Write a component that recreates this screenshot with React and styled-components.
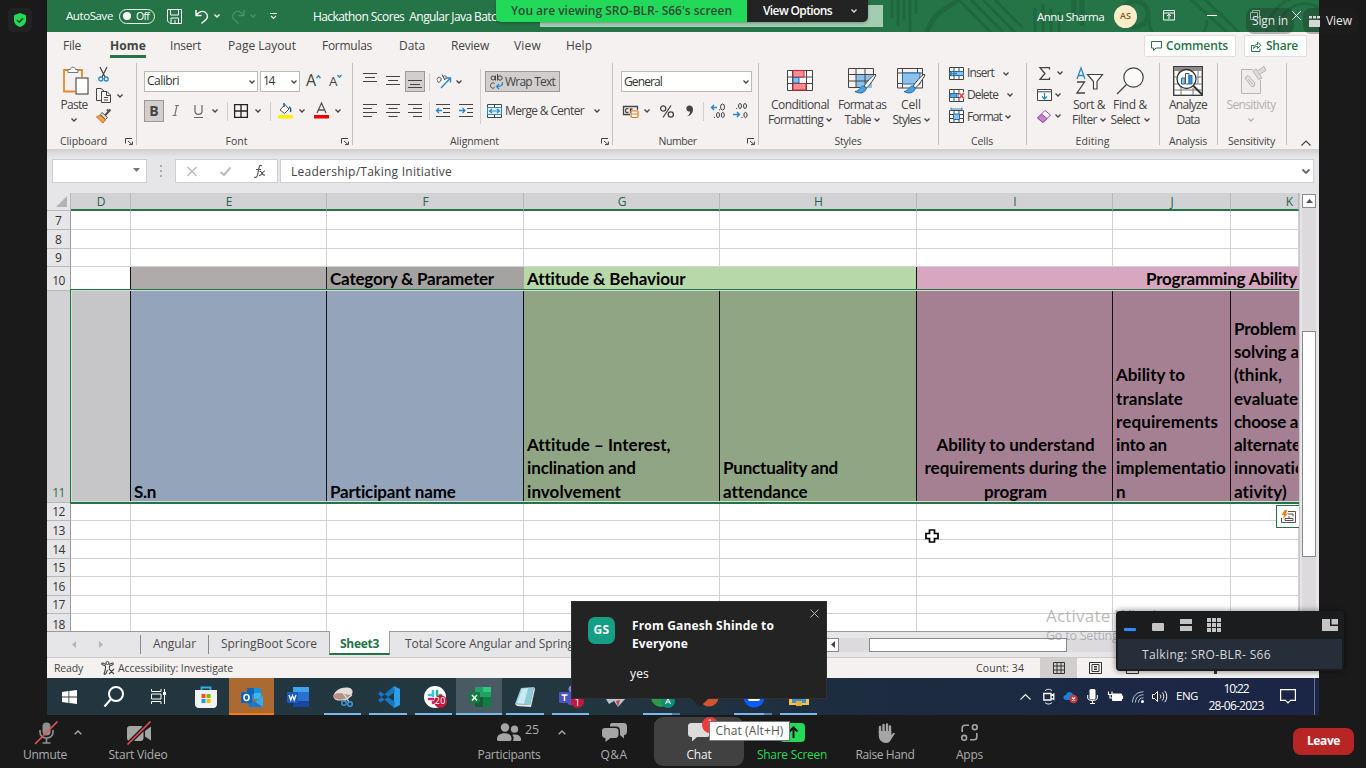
import React, { useLayoutEffect, useRef } from "react";
import styled, { createGlobalStyle } from "styled-components";

const Global = createGlobalStyle`
  * { box-sizing: border-box; }
  html, body { margin: 0; padding: 0; background: #1a1a1a; overflow: hidden; }
  body { font-family: "Open Sans", "Noto Sans", sans-serif; font-size: 12px; line-height: 1.2; color: #444; }
`;

/* ---------- text ---------- */
const TextSpan = styled.span`
  display: inline-block;
  width: max-content;
  flex: none;
  white-space: pre;
  font-size: ${(p) => p.$s || 12}px;
  font-weight: ${(p) => (p.$b ? p.$b : 400)};
  color: ${(p) => p.$c || "inherit"};
  margin-left: ${(p) => p.$ml || 0}px;
  margin-top: ${(p) => p.$mt || 0}px;
  font-family: ${(p) => (p.$lato ? 'Lato, "Open Sans", sans-serif' : "inherit")};
`;

/* Tracks its letters so that the text takes exactly w pixels. */
function T({ w, s, b, c, ml, mt, lato, children }) {
  const ref = useRef(null);
  useLayoutEffect(() => {
    const el = ref.current;
    if (!w) return;
    el.style.letterSpacing = "0px";
    const natural = el.getBoundingClientRect().width;
    el.style.letterSpacing = `${(w - natural) / el.textContent.length}px`;
  }, [w, children]);
  return (
    <TextSpan ref={ref} $s={s} $b={b} $c={c} $ml={ml} $mt={mt} $lato={lato}>
      {children}
    </TextSpan>
  );
}

const Svg = styled.svg`
  display: block;
  flex: none;
  overflow: visible;
  margin-left: ${(p) => p.$ml || 0}px;
  margin-top: ${(p) => p.$mt || 0}px;
`;
function I({ w, h, vb, ml, mt, children }) {
  return (
    <Svg width={w} height={h} viewBox={vb || `0 0 ${w} ${h}`} fill="none" $ml={ml} $mt={mt}>
      {children}
    </Svg>
  );
}
const Chev = ({ ml, mt, c = "#444", w = 6, sw = 1.3 }) => (
  <I w={w} h={4} vb="0 0 6 4" ml={ml} mt={mt}>
    <path d="M.5 .5L3 3L5.5 .5" stroke={c} strokeWidth={sw} />
  </I>
);

/* ---------- frame ---------- */
const Meeting = styled.div`
  position: relative;
  width: 1366px;
  height: 768px;
  background: #1a1a1a;
  display: flex;
  flex-direction: column;
  overflow: hidden;
`;
const Stage = styled.div`
  display: flex;
  height: 715px;
`;
const Rail = styled.div`
  width: 47px;
  padding: 8px 0 0 8px;
`;
const Shield = styled.div`
  width: 24px;
  height: 24px;
  border-radius: 5px;
  background: #222;
  display: flex;
  align-items: center;
  justify-content: center;
`;
const Screen = styled.div`
  width: 1272px;
  display: flex;
  flex-direction: column;
  background: #e6e6e8;
  overflow: hidden;
`;

/* ---------- title bar ---------- */
const TitleBar = styled.div`
  position: relative;
  isolation: isolate;
  height: 32px;
  background: #247447;
  display: flex;
  align-items: center;
  color: #fff;
  flex: none;
`;
const Pattern = styled.svg`
  position: absolute;
  z-index: -1;
  left: 840px;
  top: 0;
`;
const Toggle = styled.div`
  width: 36px;
  height: 15px;
  margin-left: 6px;
  border: 1px solid #e8f2ec;
  border-radius: 8px;
  display: flex;
  align-items: center;
  flex: none;
`;
const Knob = styled.div`
  width: 8px;
  height: 8px;
  border-radius: 50%;
  background: #fff;
  margin-left: 3px;
`;
const TitleText = styled.div`
  width: 256px;
  padding-left: 33px;
  margin-top: 2px;
  flex: none;
`;
const SearchBox = styled.div`
  width: 343px;
  height: 22px;
  background: #a2cdb2;
  margin-left: 4px;
  flex: none;
`;
const Avatar = styled.div`
  width: 23px;
  height: 23px;
  border-radius: 50%;
  background: #fdecca;
  margin-left: 10px;
  display: flex;
  align-items: center;
  justify-content: center;
  flex: none;
`;

/* ---------- ribbon ---------- */
const TabRow = styled.div`
  height: 31px;
  background: #f4f1f0;
  display: flex;
  align-items: flex-start;
  flex: none;
`;
const Tab = styled.div`
  margin-left: ${(p) => p.$ml}px;
  height: 26px;
  line-height: 28px;
  border-bottom: 3px solid ${(p) => (p.$on ? "#247447" : "transparent")};
`;
const WhiteButton = styled.div`
  width: ${(p) => p.$w}px;
  height: 22px;
  margin: 3px 0 0 ${(p) => p.$ml}px;
  background: #fff;
  border: 1px solid #e1dfdd;
  border-radius: 2px;
  display: flex;
  align-items: center;
`;
const Ribbon = styled.div`
  height: 86px;
  background: #f4f1f0;
  display: flex;
  flex: none;
`;
const Group = styled.div`
  width: ${(p) => p.$w}px;
  height: 82px;
  border-right: 1px solid #c4c2c1;
  display: flex;
  flex-direction: column;
  flex: none;
`;
const GroupBody = styled.div`
  height: 75px;
  display: flex;
  flex-direction: ${(p) => (p.$col ? "column" : "row")};
  padding-top: ${(p) => p.$pt || 0}px;
  gap: ${(p) => p.$gap || 0}px;
`;
const GroupLabel = styled.div`
  height: 7px;
  display: flex;
  align-items: center;
`;
const LabelText = styled.div`
  flex: 1;
  display: flex;
  justify-content: center;
  padding-right: ${(p) => (p.$launch ? 5 : 1)}px;
`;
const LauncherSlot = styled.div`
  width: 11px;
`;
const Row = styled.div`
  display: flex;
  align-items: center;
  height: ${(p) => p.$h}px;
  flex: none;
`;
const Column = styled.div`
  display: flex;
  flex-direction: column;
  width: ${(p) => p.$w}px;
  gap: ${(p) => p.$gap || 0}px;
  padding-top: ${(p) => p.$pt || 0}px;
  flex: none;
`;
const Field = styled.div`
  width: ${(p) => p.$w}px;
  height: 21px;
  margin-left: ${(p) => p.$ml}px;
  padding: 0 2px 0 2px;
  background: #fff;
  border: 1px solid #bdbbba;
  display: flex;
  align-items: center;
  justify-content: space-between;
  color: #333;
`;
const Pressed = styled.div`
  width: ${(p) => p.$w}px;
  height: ${(p) => p.$h || 21}px;
  margin-left: ${(p) => p.$ml}px;
  background: #d1cecd;
  border: 1px solid #9c9a99;
  display: flex;
  align-items: center;
  justify-content: center;
  flex: none;
`;
const Rule = styled.div`
  width: 1px;
  height: ${(p) => p.$h}px;
  margin-left: ${(p) => p.$ml || 0}px;
  margin-top: ${(p) => p.$mt || 0}px;
  background: ${(p) => p.$c || "#d2d0cf"};
  flex: none;
`;
const BigButton = styled.div`
  width: ${(p) => p.$w}px;
  margin-left: ${(p) => p.$ml || 0}px;
  display: flex;
  flex-direction: column;
  align-items: center;
  flex: none;
  color: ${(p) => (p.$off ? "#b3b1b0" : "#444")};
`;
const BigIcon = styled.div`
  height: 35px;
  width: 100%;
  display: flex;
  align-items: center;
  justify-content: center;
`;
const BigLine = styled.div`
  height: 14.5px;
  display: flex;
  align-items: center;
  justify-content: center;
`;

/* ---------- formula bar ---------- */
const FormulaBar = styled.div`
  height: 44px;
  padding-top: 10px;
  display: flex;
  background: linear-gradient(#cfcfd0, #e6e6e8 8px);
  flex: none;
`;
const FormulaBox = styled.div`
  width: ${(p) => p.$w}px;
  height: 24px;
  margin-left: ${(p) => p.$ml}px;
  background: #fff;
  border: 1px solid #cfcfd1;
  display: flex;
  align-items: center;
  flex: none;
`;

/* ---------- sheet ---------- */
const SheetArea = styled.div`
  height: 438px;
  display: flex;
  flex: none;
`;
const Grid = styled.div`
  position: relative;
  width: 1252px;
  height: 438px;
  display: grid;
  grid-template-columns: 24px 60px 196px 197px 196px 197px 196px 118px 68px;
  grid-template-rows: 18px 19px 19px 18px 24px 212px 18px 19px 19px 18px 19px 18px 20px;
  overflow: hidden;
  background: #fff;
`;
const ColHead = styled.div`
  background: #d2d2d4;
  border-right: 1px solid #b8b8ba;
  border-bottom: 2px solid #247447;
  color: #24644a;
  display: flex;
  align-items: center;
  justify-content: center;
  padding-top: 2px;
  padding-left: ${(p) => p.$pl || 1}px;
`;
const Corner = styled.div`
  background: #e6e6e8;
  border-right: 1px solid #b8b8ba;
  border-bottom: 1px solid #b8b8ba;
  display: flex;
  align-items: center;
  justify-content: flex-end;
  padding-right: 3px;
`;
const RowHead = styled.div`
  background: ${(p) => (p.$on ? "#d2d2d4" : "#e6e6e8")};
  color: ${(p) => (p.$on ? "#247447" : "#333")};
  border-right: 1px solid #9a9a9c;
  border-bottom: 1px solid #b8b8ba;
  display: flex;
  align-items: flex-end;
  justify-content: center;
  line-height: ${(p) => (p.$tall ? 18 : 16)}px;
`;
const Cell = styled.div`
  background: ${(p) => p.$bg || "#fff"};
  border-right: 1px solid ${(p) => p.$line || "#d2d2d2"};
  border-bottom: ${(p) => (p.$flush ? 0 : 1)}px solid ${(p) => (p.$bg ? p.$bg : "#d2d2d2")};
  grid-column: span ${(p) => p.$span || 1};
  padding: 0 1px 0 3px;
  display: flex;
  flex-direction: column;
  justify-content: flex-end;
  align-items: ${(p) => p.$align || "flex-start"};
  color: #000;
  line-height: 23.3px;
  overflow: hidden;
  min-width: 0;
`;
const Selection = styled.div`
  position: absolute;
  left: 23px;
  top: 96px;
  width: 1260px;
  height: 215px;
  border: solid #247447;
  border-width: 1px 0 2px 1px;
  box-shadow: inset 0 0 0 1px #cfdfd5;
`;
const QuickTag = styled.div`
  position: absolute;
  left: 1229px;
  top: 312px;
  width: 24px;
  height: 23px;
  background: #fff;
  border: 1px solid #247447;
  display: flex;
  align-items: center;
  justify-content: center;
`;
const CrossCursor = styled.div`
  position: absolute;
  left: 878px;
  top: 336px;
`;
const Gutter = styled.div`
  width: 20px;
  padding: 1px 3px 0 2px;
  border-left: 1px solid #c6c6c8;
  background: #e6e6e8;
`;
const Track = styled.div`
  height: 437px;
  width: 14px;
  background: #dcdadd;
`;
const ScrollButton = styled.div`
  width: ${(p) => p.$w}px;
  height: ${(p) => p.$h}px;
  background: #fff;
  border: 1px solid #8a8a8c;
  display: flex;
  align-items: center;
  justify-content: center;
  margin-left: ${(p) => p.$ml || 0}px;
  flex: none;
`;
const Thumb = styled.div`
  width: 14px;
  height: 226px;
  margin-top: 123px;
  background: #fff;
  border: 1px solid #8a8a8c;
`;

/* ---------- sheet tabs, status ---------- */
const SheetTabs = styled.div`
  height: 26px;
  background: #e6e6e8;
  border-top: 1px solid #9a9a9c;
  display: flex;
  align-items: center;
  flex: none;
  color: #4a4a4a;
`;
const ActiveTab = styled.div`
  width: 61px;
  height: 24px;
  margin: -3px 0 0 12px;
  padding-top: 5px;
  background: #fff;
  border: 1px solid #9a9a9c;
  border-width: 0 1px 2px 1px;
  border-bottom-color: #247447;
  display: flex;
  align-items: center;
  justify-content: center;
  flex: none;
`;
const HTrack = styled.div`
  width: 470px;
  height: 14px;
  background: #dcdadd;
  display: flex;
  margin-left: 226px;
  flex: none;
`;
const StatusBar = styled.div`
  height: 21px;
  background: #f4f1f0;
  border-top: 1px solid #cbcacb;
  display: flex;
  align-items: center;
  flex: none;
`;
const ViewButton = styled.div`
  width: 37px;
  height: 20px;
  margin-left: ${(p) => p.$ml || 0}px;
  background: ${(p) => (p.$on ? "#d1cecd" : "transparent")};
  display: flex;
  align-items: center;
  justify-content: center;
`;

/* ---------- taskbar ---------- */
const Taskbar = styled.div`
  height: 37px;
  background: linear-gradient(90deg, #233640 0%, #22373f 40%, #1d2c40 65%, #1b2547 100%);
  display: flex;
  align-items: stretch;
  flex: none;
  color: #fff;
`;
const Slot = styled.div`
  position: relative;
  width: ${(p) => p.$w || 45.6}px;
  background: ${(p) => p.$bg || "transparent"};
  display: flex;
  align-items: center;
  justify-content: center;
  flex: none;
`;
const Running = styled.div`
  position: absolute;
  bottom: 0;
  left: ${(p) => (p.$full ? 0 : 4)}px;
  right: ${(p) => (p.$full ? 0 : 4)}px;
  height: 2px;
  background: ${(p) => p.$c || "#76b9ed"};
  border-right: ${(p) => (p.$multi ? "8px solid #4a80ae" : "0")};
`;
const CountDot = styled.div`
  position: absolute;
  left: 23px;
  top: 17px;
  width: 13px;
  height: 13px;
  border-radius: 50%;
  background: #c4183f;
  color: #fff;
  display: flex;
  align-items: center;
  justify-content: center;
`;
const Tray = styled.div`
  margin-left: auto;
  width: 300px;
  display: flex;
  align-items: center;
`;
const Clock = styled.div`
  width: 60px;
  margin-left: 8px;
  display: flex;
  flex-direction: column;
  align-items: center;
  line-height: 17px;
`;
const Peek = styled.div`
  width: 1px;
  height: 37px;
  margin-left: 18px;
  background: #69718a;
`;

/* ---------- meeting controls ---------- */
const Controls = styled.div`
  height: 53px;
  display: flex;
  align-items: flex-start;
  color: #adadad;
`;
const Control = styled.div`
  width: ${(p) => p.$w}px;
  height: 49px;
  margin: 2px 0 0 ${(p) => p.$ml}px;
  border-radius: 9px;
  background: ${(p) => (p.$on ? "#414141" : "transparent")};
  display: flex;
  flex-direction: column;
  align-items: center;
  flex: none;
`;
const ControlIcon = styled.div`
  height: 31px;
  display: flex;
  align-items: center;
  justify-content: center;
`;
const ControlLabel = styled.div`
  height: 14px;
  display: flex;
  align-items: center;
`;
const Leave = styled.div`
  width: 61px;
  height: 27px;
  margin: 13px 0 0 299px;
  border-radius: 8px;
  background: #b82525;
  display: flex;
  align-items: center;
  justify-content: center;
`;

/* ---------- overlays ---------- */
const Banner = styled.div`
  position: absolute;
  left: 496px;
  top: 0;
  width: 372px;
  height: 22px;
  display: flex;
  border-radius: 0 0 5px 5px;
  overflow: hidden;
  box-shadow: 0 1px 3px rgba(0, 0, 0, 0.3);
`;
const BannerPart = styled.div`
  width: ${(p) => p.$w}px;
  background: ${(p) => p.$bg};
  display: flex;
  align-items: center;
  padding-left: ${(p) => p.$pl}px;
`;
const Pill = styled.div`
  position: absolute;
  left: ${(p) => p.$x}px;
  top: 8px;
  width: ${(p) => p.$w}px;
  height: 26px;
  border-radius: 8px;
  background: rgba(34, 34, 34, 0.3);
  display: flex;
  align-items: center;
  padding-left: 6px;
  color: #e8e8e8;
`;
const Watermark = styled.div`
  position: absolute;
  left: 1046px;
  top: 606px;
  display: flex;
  flex-direction: column;
  color: rgba(120, 120, 120, 0.5);
`;
const SpeakerPanel = styled.div`
  position: absolute;
  left: 1116px;
  top: 611px;
  width: 228px;
  height: 60px;
  border-radius: 4px;
  background: #1b1c1e;
  padding: 0 2px;
  box-shadow: 0 0 6px rgba(0, 0, 0, 0.5);
`;
const SpeakerTools = styled.div`
  height: 28px;
  display: flex;
  align-items: center;
`;
const Speaker = styled.div`
  height: 30px;
  background: #262f39;
  display: flex;
  align-items: center;
  color: #d4d8dc;
`;
const Toast = styled.div`
  position: absolute;
  left: 571px;
  top: 601px;
  width: 256px;
  height: 98px;
  background: #232323;
  border: 1px solid #303030;
  display: flex;
  color: #fff;
`;
const ToastPointer = styled.div`
  position: absolute;
  left: 119px;
  top: 96px;
  border: 9px solid transparent;
  border-top-color: #232323;
  border-bottom: 0;
`;
const ToastAvatar = styled.div`
  width: 27px;
  height: 27px;
  margin: 15px 0 0 16px;
  border-radius: 7px;
  background: #169f85;
  display: flex;
  align-items: center;
  justify-content: center;
  flex: none;
`;
const ToastBody = styled.div`
  width: 170px;
  padding: 15px 0 0 17px;
  display: flex;
  flex-direction: column;
  line-height: 18px;
  flex: none;
`;
const Tooltip = styled.div`
  position: absolute;
  left: 709px;
  top: 721px;
  width: 81px;
  height: 20px;
  background: #fff;
  border: 1px solid #767676;
  display: flex;
  align-items: center;
  justify-content: center;
  color: #575757;
`;
const ChatBadge = styled.div`
  position: absolute;
  left: 702px;
  top: 717px;
  width: 16px;
  height: 16px;
  border-radius: 50%;
  background: #f23a3a;
  color: #fff;
  display: flex;
  justify-content: center;
  line-height: 12px;
`;

/* ---------- icon drawings ---------- */
const K = "#444";
const B = "#2b88c8";
const Lines = ({ rows, ml, h = 14 }) => (
  <I w={14} h={h} ml={ml}>
    {rows.map(([x1, x2, y], i) => (
      <path key={i} d={`M${x1} ${y}H${x2}`} stroke={K} />
    ))}
  </I>
);
const Launcher = () => (
  <I w={8} h={7}>
    <path d="M.5 5.5V.5H7M3 3L7 6.5M7.4 3.5V6.6H4" stroke={K} />
  </I>
);
const Brush = () => (
  <g>
    <path d="M27 6C23 9 19 14 16 18L18.5 20C22 17 26 11 28 7Z" fill="#f4f1f0" stroke={K} />
    <path d="M15.5 18C12 18 12 23 7 23.5C11 26 17 25.5 18.5 20Z" fill="#4ba0e0" stroke="#1d6fb0" />
  </g>
);
const TableGlyph = () => (
  <I w={28} h={26}>
    <rect x="8" y="6" width="16" height="14" fill="#8dc1ec" />
    <path d="M.5 .5H25.5V8M.5 .5V19.5H12M.5 6.5H25M.5 13H20M8 .5V20M17 .5V16" stroke={K} />
    <Brush />
  </I>
);
const CellStyleGlyph = () => (
  <I w={28} h={26}>
    <path d="M.5 .5H25.5V20H.5ZM.5 5H25M5.5 .5V20M.5 15.5H12M20.5 .5V8" stroke={K} />
    <path d="M5.5 5H23V16H5.5Z" fill="#8dc1ec" stroke="#1d6fb0" />
    <Brush />
  </I>
);
const CellsGlyph = ({ kind }) => (
  <I w={15} h={13} ml={10}>
    <path d="M.5 .5H14.5V12.5H.5ZM.5 4.5H14.5M.5 8.5H14.5M5 .5V12.5M10 .5V12.5" stroke={K} fill="#fff" />
    {kind === "insert" && <path d="M5 4.5H14.5V8.5H5Z" fill="#8dc1ec" stroke="#1d6fb0" />}
    {kind === "insert" && <path d="M8 6.5H1M3.5 4L1 6.5L3.5 9" stroke={B} strokeWidth="1.4" />}
    {kind === "delete" && <path d="M1 4.5H8V8.5H1Z" fill="#5ba4dd" stroke="#1d6fb0" />}
    {kind === "delete" && <path d="M10 3H15V10H10Z" fill="#f4f1f0" />}
    {kind === "delete" && <path d="M10 4L15 9.5M15 4L10 9.5" stroke="#e33a3a" strokeWidth="1.5" />}
    {kind === "format" && <path d="M4.5 4H10.5V9.5H4.5Z" fill="#8dc1ec" stroke="#1d6fb0" />}
    {kind === "format" && <path d="M2 -1H13M2 -2.5V.5M13 -2.5V.5" stroke={B} />}
  </I>
);
const UserGlyph = () => (
  <g fill="#a5a5a5">
    <circle cx="8" cy="4.5" r="4.2" />
    <circle cx="17.5" cy="6.2" r="3.6" />
    <path d="M0 16C0 12.5 3 10.3 7.5 10.3C12 10.3 14.5 12.5 14.5 15.5C14.5 17.3 14 18 13 18H1.5C.5 18 0 17.5 0 16Z" />
    <path d="M15.8 18H23C24 18 24.3 17 24 15.5C23 11.5 19 10.8 15.2 11.8C17 13.5 17 16 15.8 18Z" />
  </g>
);

/* ---------- sections ---------- */
function Title() {
  return (
    <TitleBar>
      <Pattern width="432" height="32" fill="none" stroke="#1d613b" strokeWidth="3" opacity=".6">
        <path d="M5 0V18M11 0V26M17 0V20M23 0V32M29 0V14M72 0L104 32M84 0L116 32M96 0L128 32M108 0L135 27M148 8V32M156 4V32M164 8V32M172 12V32M262 18A22 22 0 0 0 320 20M300 -4L340 32M312 -6L352 32M392 32A26 26 0 0 1 432 8M380 32A38 38 0 0 1 420 -4" />
        <circle cx="248" cy="14" r="13" strokeWidth="5" />
        <path d="M40 32C50 6 62 10 70 0M187 0V20M195 0V26" strokeWidth="5" />
      </Pattern>
      <T w={47} s={11.5} ml={19}>AutoSave</T>
      <Toggle>
        <Knob />
        <T w={13} s={10.5} ml={5}>Off</T>
      </Toggle>
      <I w={15} h={15} ml={12}>
        <path d="M.5 .5H14.5V14.5H3L.5 12ZM3.5 .5V6H11.5V.5M4 14V9H11.5V14M8 11V14" stroke="#fff" />
      </I>
      <I w={14} h={15} ml={13}>
        <path d="M1 1V6.5H6.5M1 6.5C4 2 8 1.5 10.5 3.5C13.5 6 12.5 9 11 10.5L6.5 14.5" stroke="#fff" strokeWidth="1.4" />
      </I>
      <Chev c="#fff" ml={5} />
      <I w={14} h={15} ml={11}>
        <path d="M13 1V6.5H7.5M13 6.5C10 2 6 1.5 3.5 3.5C.5 6 1.5 9 3 10.5L7.5 14.5" stroke="#4b9069" strokeWidth="1.3" />
      </I>
      <Chev c="#4b9069" ml={5} />
      <I w={7} h={7} ml={14}>
        <path d="M0 .5H7M1 3L3.5 5.5L6 3" stroke="#fff" strokeWidth="1.2" />
      </I>
      <Rule $h={0} $ml={2} />
      <TitleText>
        <T w={190} s={12}>Hackathon Scores  Angular Java Batch</T>
      </TitleText>
      <SearchBox />
      <T w={67} s={11.5} ml={154} mt={1}>Annu Sharma</T>
      <Avatar>
        <T w={11} s={9} c="#7a5a14" b={600}>AS</T>
      </Avatar>
      <I w={12} h={11} ml={26} mt={-1}>
        <path d="M.5 .5H11.5V10H.5ZM.5 3H11.5M6 9V4.5M4 6L6 4.2L8 6" stroke="#fff" />
      </I>
      <I w={10} h={1} ml={32} mt={-2}>
        <path d="M0 .5H10" stroke="#fff" />
      </I>
      <I w={10} h={10} ml={33} mt={-2}>
        <path d="M.5 2.5H7.5V9.5H.5ZM2.5 2V.5H9.5V7.5H8" stroke="#d5e6dc" />
      </I>
      <I w={9} h={9} ml={32} mt={-2}>
        <path d="M0 0L9 9M9 0L0 9" stroke="#fff" />
      </I>
    </TitleBar>
  );
}

const TABS = [
  ["File", 18, 16], ["Home", 36, 29], ["Insert", 31, 24], ["Page Layout", 68, 27], ["Formulas", 50, 26],
  ["Data", 26, 27], ["Review", 38, 26], ["View", 27, 25], ["Help", 26, 25],
];

function Tabs() {
  return (
    <TabRow>
      {TABS.map(([name, w, ml]) => (
        <Tab key={name} $ml={ml} $on={name === "Home"}>
          <T w={w} s={12} b={name === "Home" ? 700 : 400}>{name}</T>
        </Tab>
      ))}
      <WhiteButton $w={92} $ml={552}>
        <I w={11} h={10} ml={6}>
          <path d="M.5 .5H10.5V7H5L2.5 9.3V7H.5Z" stroke="#247447" />
        </I>
        <T w={62} s={12} b={600} c="#247447" ml={4}>Comments</T>
      </WhiteButton>
      <WhiteButton $w={63} $ml={8}>
        <I w={10} h={11} ml={6}>
          <path d="M3 4.5H.5V10.5H9V7.5M2.5 7.5C3 4.5 4.5 3.5 6.5 3.5V1L9.8 4.3L6.5 7.5V5.5C4.5 5.5 3.5 6 2.5 7.5Z" stroke="#247447" />
        </I>
        <T w={32} s={12} b={600} c="#247447" ml={5}>Share</T>
      </WhiteButton>
    </TabRow>
  );
}

function Label({ w, launch, children }) {
  return (
    <GroupLabel>
      <LabelText $launch={launch}>
        <T w={w} s={10.5}>{children}</T>
      </LabelText>
      {launch && <LauncherSlot><Launcher /></LauncherSlot>}
    </GroupLabel>
  );
}

function RibbonBar() {
  return (
    <Ribbon>
      <Group $w={90}>
        <GroupBody>
          <BigButton $w={36} $ml={9}>
            <BigIcon>
              <I w={26} h={29} ml={4}>
                <path d="M5 4H1V25.5H12" stroke="#e38b2c" strokeWidth="1.8" />
                <path d="M15 4H19V11" stroke="#e38b2c" strokeWidth="1.8" />
                <path d="M5 6.5V3.5H7.5C7.5 .5 12.5 .5 12.5 3.5H15V6.5Z" fill="#fff" stroke="#777" />
                <rect x="13" y="12" width="12" height="16" fill="#fff" stroke="#333" />
              </I>
            </BigIcon>
            <BigLine><T w={27} s={12}>Paste</T></BigLine>
            <BigLine><Chev /></BigLine>
          </BigButton>
          <Column $w={36} $pt={4} $gap={6}>
            <I w={11} h={15} ml={6}>
              <path d="M2 0L7 10M9 0L4 10" stroke={K} strokeWidth="1.2" />
              <circle cx="2.8" cy="12" r="2" stroke={B} strokeWidth="1.3" />
              <circle cx="8.2" cy="12" r="2" stroke={B} strokeWidth="1.3" />
            </I>
            <Row $h={15}>
              <I w={15} h={15} ml={4}>
                <path d="M5 12.5H.5V.5H5L8 3M5.5 3.5H11L14.5 7V14.5H5.5ZM10.5 3.5V7.5H14M8 9.5H12M8 12H12" stroke={K} />
              </I>
              <Chev ml={6} />
            </Row>
            <I w={15} h={15} ml={4}>
              <path d="M14.5 .5L9 6.5M13.5 3L11 .5" stroke="#555" strokeWidth="2" />
              <path d="M6 3.5L11.5 8.5L9.5 10.5L4.5 5.5Z" fill="#ddd" stroke="#555" />
              <path d="M4 6L9.5 11L7 14L.5 8Z" fill="#f0a04b" stroke="#d9731a" />
            </I>
          </Column>
        </GroupBody>
        <Label w={47} launch>Clipboard</Label>
      </Group>

      <Group $w={216}>
        <GroupBody $col $pt={8} $gap={8}>
          <Row $h={21}>
            <Field $w={114} $ml={7}><T w={32} s={12}>Calibri</T><Chev /></Field>
            <Field $w={40} $ml={2}><T w={11} s={12}>14</T><Chev /></Field>
            <T s={16} w={10} ml={6} mt={-2}>A</T>
            <I w={5} h={3} mt={-10}><path d="M.5 3L2.5 .7L4.5 3" stroke={B} strokeWidth="1.3" /></I>
            <T s={13.5} w={8} ml={8}>A</T>
            <I w={5} h={3} mt={-10}><path d="M.5 0L2.5 2.3L4.5 0" stroke={B} strokeWidth="1.3" /></I>
          </Row>
          <Row $h={22}>
            <Pressed $w={20} $h={22} $ml={7}><T s={14} b={700}>B</T></Pressed>
            <I w={8} h={11} ml={8} mt={-1}><path d="M3 .5H7M.5 10.5H4.5M5 .5L2.7 10.5" stroke="#777" strokeWidth="1.2" /></I>
            <I w={9} h={13} ml={14}><path d="M1 0V6C1 10.5 8 10.5 8 6V0M0 12.5H9" stroke="#666" strokeWidth="1.2" /></I>
            <Chev ml={9} />
            <Rule $h={19} $ml={9} />
            <I w={14} h={14} ml={6}><path d="M.6 .6H13.4V13.4H.6ZM7 .6V13.4M.6 7H13.4" stroke="#222" strokeWidth="1.3" /></I>
            <Chev ml={7} />
            <Rule $h={19} $ml={9} />
            <I w={15} h={16} ml={7} mt={-1}>
              <path d="M2 7L7 1.5L11 6L6.5 10.5Z" fill="#fff" stroke="#555" />
              <path d="M6 4V0M11 4C13 5 13 7 12.5 9" stroke="#1d5f9e" strokeWidth="1.5" />
              <rect y="12" width="15" height="3.5" fill="#fcf000" />
            </I>
            <Chev ml={6} />
            <I w={15} h={16} ml={9} mt={-1}>
              <path d="M3 10L7.5 0L12 10M4.5 7H10.5" stroke="#555" strokeWidth="1.3" />
              <rect y="12" width="15" height="3.5" fill="#f00000" />
            </I>
            <Chev ml={6} />
          </Row>
        </GroupBody>
        <Label w={22} launch>Font</Label>
      </Group>

      <Group $w={260}>
        <GroupBody $pt={8}>
          <Column $w={127} $gap={8}>
            <Row $h={21}>
              <Lines h={13} ml={10} rows={[[0, 14, -1.5], [2, 12, 2.5], [0, 14, 6.5]]} />
              <Lines h={13} ml={9} rows={[[0, 14, 1.5], [2, 12, 5.5], [0, 14, 9.5]]} />
              <Pressed $w={20} $ml={5}><Lines h={13} rows={[[0, 14, 5.5], [2, 12, 9.5], [0, 14, 12.5]]} /></Pressed>
              <Rule $h={18} $ml={4} />
              <I w={15} h={15} ml={6}>
                <path d="M1 5.5C1 2.5 6 2.5 5 6C4 9 1 9 1.5 6.5M6 .5L9 6M7 3C9 0 12 3 9 5.5" stroke={K} />
                <path d="M5 14L14 4.5M10 4H14.5V8.5" stroke={B} strokeWidth="1.4" />
              </I>
              <Chev ml={5} />
            </Row>
            <Row $h={22}>
              <Lines ml={10} rows={[[0, 14, 0.5], [0, 9, 4.5], [0, 14, 8.5], [0, 9, 12.5]]} />
              <Lines ml={9} rows={[[0, 14, 0.5], [2.5, 11.5, 4.5], [0, 14, 8.5], [2.5, 11.5, 12.5]]} />
              <Lines ml={8} rows={[[0, 14, 0.5], [5, 14, 4.5], [0, 14, 8.5], [5, 14, 12.5]]} />
              <Rule $h={18} $ml={7} />
              <I w={14} h={14} ml={6}>
                <path d="M0 .5H14M7 4.5H14M7 8.5H14M0 12.5H14" stroke={K} />
                <path d="M6 6.5H.5M3 4L.5 6.5L3 9" stroke={B} strokeWidth="1.3" />
              </I>
              <I w={14} h={14} ml={9}>
                <path d="M0 .5H14M8 4.5H14M8 8.5H14M0 12.5H14" stroke={K} />
                <path d="M0 6.5H6M3.5 4L6 6.5L3.5 9" stroke={B} strokeWidth="1.3" />
              </I>
            </Row>
          </Column>
          <Rule $h={55} $mt={-2} />
          <Column $w={130} $gap={8}>
            <Row $h={21}>
              <Pressed $w={75} $ml={4}>
                <I w={13} h={15}>
                  <circle cx="3" cy="4" r="2" stroke={K} /><path d="M5.5 1.5V6.5M7.5 0V6.5" stroke={K} />
                  <circle cx="10" cy="4" r="2.2" stroke={K} />
                  <path d="M4.5 9.5C2.5 8 .5 9.5 .5 11.5C.5 14 3 15 4.5 13.5" stroke={K} />
                  <path d="M12.5 8C13 12 10 12.5 6.5 12.5M9 10L6.5 12.5L9 15" stroke={B} strokeWidth="1.3" />
                </I>
                <T w={50} s={12} ml={2} mt={1}>Wrap Text</T>
              </Pressed>
            </Row>
            <Row $h={22}>
              <I w={15} h={14} ml={6} mt={-1}>
                <path d="M.5 .5H14.5V13.5H.5ZM.5 3.5H14.5M.5 10.5H14.5M7.5 .5V3M7.5 11V13.5" stroke={K} fill="#fff" />
                <path d="M.5 3.5H14.5V10.5H.5Z" fill="#dceefb" stroke={B} />
                <path d="M2.5 7H12.5M5 5L2.5 7L5 9M10 5L12.5 7L10 9" stroke={B} strokeWidth="1.2" />
              </I>
              <T w={79} s={12} ml={3} mt={1}>Merge & Center</T>
              <Chev ml={10} />
            </Row>
          </Column>
        </GroupBody>
        <Label w={49} launch>Alignment</Label>
      </Group>

      <Group $w={146}>
        <GroupBody $col $pt={8} $gap={8}>
          <Row $h={21}>
            <Field $w={131} $ml={8}><T w={38} s={12} mt={1}>General</T><Chev /></Field>
          </Row>
          <Row $h={22}>
            <I w={15} h={13} ml={10}>
              <path d="M7 9.5H.5V1.5H14.5V5M5.5 4C3 3 2.5 4.5 2.5 6C2.5 7.5 4 8 5.5 7M7.5 8V4H9.5" stroke={K} strokeWidth="1.3" />
              <path d="M8 6.5C8 5.5 15 5.5 15 6.5V11.5C15 12.8 8 12.8 8 11.5ZM8 9H15" fill="#fff" stroke="#e07a1f" strokeWidth="1.2" />
            </I>
            <Chev ml={6} />
            <I w={14} h={13} ml={10}>
              <circle cx="3.2" cy="3.5" r="2.6" stroke={K} strokeWidth="1.3" /><circle cx="10.8" cy="9.5" r="2.6" stroke={K} strokeWidth="1.3" />
              <path d="M11 .5L3 12.5" stroke={K} strokeWidth="1.3" />
            </I>
            <I w={7} h={12} ml={12}>
              <path d="M3.5 .5A3 3 0 1 0 4 6.4C4 8.5 3 10 1 11.5C5 10.5 7 7.5 7 4.5C7 2 5.5 .5 3.5 .5Z" fill={K} />
            </I>
            <Rule $h={19} $ml={10} />
            <I w={15} h={15} ml={7} mt={-2}>
              <path d="M6 4.5H.5M3 2L.5 4.5L3 7" stroke={B} strokeWidth="1.4" />
              <ellipse cx="11.5" cy="4" rx="2" ry="3" stroke={K} />
              <ellipse cx="7" cy="12" rx="1.5" ry="2.5" stroke={K} /><ellipse cx="11.8" cy="12" rx="1.5" ry="2.5" stroke={K} />
              <path d="M3 14.5H4M8 6.8H9" stroke={K} />
            </I>
            <I w={15} h={15} ml={7} mt={-2}>
              <ellipse cx="7" cy="3" rx="1.5" ry="2.5" stroke={K} /><ellipse cx="12" cy="3" rx="1.5" ry="2.5" stroke={K} />
              <ellipse cx="12.5" cy="12" rx="1.6" ry="2.6" stroke={K} />
              <path d="M3 5.5H4M8.5 14.5H9.5" stroke={K} />
              <path d="M0 11.5H6.5M4 9L6.5 11.5L4 14" stroke={B} strokeWidth="1.4" />
            </I>
          </Row>
        </GroupBody>
        <Label w={38} launch>Number</Label>
      </Group>

      <Group $w={180}>
        <GroupBody>
          <BigButton $w={68} $ml={7}>
            <BigIcon>
              <I w={26} h={21} mt={-1}>
                <path d="M.5 .5H25.5V20.5H.5ZM.5 7H25.5M.5 13.5H25.5M5.5 .5V20.5M19.5 .5V20.5" stroke={K} fill="#fff" />
                <path d="M6 .5H17V7H6ZM6 13.5H19V20H6Z" fill="#f78f92" stroke="#d8232e" />
                <path d="M6 7.5H12V13H6Z" fill="#8dc1ec" stroke="#1d6fb0" />
              </I>
            </BigIcon>
            <BigLine><T w={58} s={12}>Conditional</T></BigLine>
            <BigLine><T w={55} s={12}>Formatting</T><Chev ml={3} /></BigLine>
          </BigButton>
          <BigButton $w={56}>
            <BigIcon><TableGlyph /></BigIcon>
            <BigLine><T w={48} s={12}>Format as</T></BigLine>
            <BigLine><T w={26} s={12}>Table</T><Chev ml={3} /></BigLine>
          </BigButton>
          <BigButton $w={42}>
            <BigIcon><CellStyleGlyph /></BigIcon>
            <BigLine><T w={20} s={12}>Cell</T></BigLine>
            <BigLine><T w={28} s={12}>Styles</T><Chev ml={3} /></BigLine>
          </BigButton>
        </GroupBody>
        <Label w={27}>Styles</Label>
      </Group>

      <Group $w={88}>
        <GroupBody $col>
          <Row $h={21}><CellsGlyph kind="insert" /><T w={27} s={12} ml={3}>Insert</T><Chev ml={9} /></Row>
          <Row $h={22}><CellsGlyph kind="delete" /><T w={31} s={12} ml={3}>Delete</T><Chev ml={9} /></Row>
          <Row $h={21}><CellsGlyph kind="format" /><T w={35} s={12} ml={3} mt={1}>Format</T><Chev ml={3} /></Row>
        </GroupBody>
        <Label w={22}>Cells</Label>
      </Group>

      <Group $w={133}>
        <GroupBody>
          <Column $w={41}>
            <Row $h={20}>
              <I w={11} h={13} ml={12}><path d="M10.5 2.5V.6H1L6 6.5L1 12.4H10.5V10.5" stroke={K} strokeWidth="1.3" /></I>
              <Chev ml={7} />
            </Row>
            <Row $h={23}>
              <I w={15} h={12} ml={10}>
                <path d="M.5 .5H14.5V11.5H.5ZM.5 2.8H14.5" stroke={K} fill="#fff" />
                <path d="M7.5 4V10M5 7.5L7.5 10L10 7.5" stroke={B} strokeWidth="1.3" />
              </I>
              <Chev ml={3} />
            </Row>
            <Row $h={20}>
              <I w={14} h={13} ml={10}>
                <path d="M8 .5L13.5 5L6 12.5L.5 8Z" fill="#fff" stroke="#a148a8" />
                <path d="M4.5 4L10 8.5L6 12.5L.5 8Z" fill="#c77fd0" stroke="#a148a8" />
              </I>
              <Chev ml={4} />
            </Row>
          </Column>
          <BigButton $w={42}>
            <BigIcon>
              <I w={27} h={26}>
                <path d="M1 11L5 0L9 11M2.5 7.5H7.5" stroke={B} strokeWidth="1.3" />
                <path d="M1 14H8.5L1 25H9" stroke={K} strokeWidth="1.3" />
                <path d="M11.5 6.5H26.5L21 13.5V21H17.5V13.5Z" stroke={K} fill="#fff" strokeWidth="1.2" />
              </I>
            </BigIcon>
            <BigLine><T w={32} s={12}>Sort &</T></BigLine>
            <BigLine><T w={25} s={12}>Filter</T><Chev ml={3} /></BigLine>
          </BigButton>
          <BigButton $w={40}>
            <BigIcon>
              <I w={27} h={28}>
                <circle cx="16.5" cy="10.5" r="9.7" fill="#fbfafa" stroke={K} strokeWidth="1.2" />
                <path d="M9.5 17.5L0 27" stroke={K} strokeWidth="1.3" />
              </I>
            </BigIcon>
            <BigLine><T w={34} s={12}>Find &</T></BigLine>
            <BigLine><T w={29} s={12}>Select</T><Chev ml={4} /></BigLine>
          </BigButton>
        </GroupBody>
        <Label w={34}>Editing</Label>
      </Group>

      <Group $w={58}>
        <GroupBody>
          <BigButton $w={56}>
            <BigIcon>
              <I w={30} h={30}>
                <rect x=".7" y=".7" width="28.6" height="28.6" fill="#fff" stroke="#333" strokeWidth="1.3" />
                <rect x="1" y="1" width="28" height="4" fill="#8a8a8a" />
                <path d="M1 11H29M1 18H29M1 24H29M8 18V29M20 22V29M6 5V18M25 5V18" stroke="#777" />
                <circle cx="13.5" cy="13" r="9.5" fill="#fff" stroke="#333" strokeWidth="1.3" />
                <path d="M20.5 20L29 28.5" stroke="#333" strokeWidth="2" />
                <path d="M8.5 12H12V18H8.5Z" fill="#8dc1ec" stroke="#1d6fb0" />
                <path d="M12.5 7.5H16V18H12.5Z" fill="#fff" stroke="#555" />
                <path d="M16 9.5H19V18H16Z" fill="#3f8fd0" stroke="#1d6fb0" />
              </I>
            </BigIcon>
            <BigLine><T w={38} s={12}>Analyze</T></BigLine>
            <BigLine><T w={23} s={12}>Data</T></BigLine>
          </BigButton>
        </GroupBody>
        <Label w={38}>Analysis</Label>
      </Group>

      <Group $w={69}>
        <GroupBody>
          <BigButton $w={66} $off>
            <BigIcon>
              <I w={25} h={28} ml={4} mt={-1}>
                <path d="M12 3.5H.5V27.5H19.5V14" stroke="#b8b6b5" fill="#efedec" />
                <path d="M4 12L7 9.5L14 17L13 20.5L10.5 20.5ZM7 13L12 18.5" stroke="#b8b6b5" fill="#e4e2e1" />
                <path d="M12 5L15 3L21 12L17.5 13.5ZM17 4.5L23 .5L25 4.5L19 8" fill="#dddbda" stroke="#b8b6b5" />
              </I>
            </BigIcon>
            <BigLine><T w={49} s={12}>Sensitivity</T></BigLine>
            <BigLine><Chev c="#b3b1b0" /></BigLine>
          </BigButton>
        </GroupBody>
        <Label w={47}>Sensitivity</Label>
      </Group>
      <I w={10} h={6} ml={14} mt={77}><path d="M.5 5.5L5 1L9.5 5.5" stroke={K} strokeWidth="1.2" /></I>
    </Ribbon>
  );
}

function Formula() {
  return (
    <FormulaBar>
      <FormulaBox $w={95} $ml={5}>
        <I w={7} h={4} ml={80} mt={-2}><path d="M0 0H7L3.5 4Z" fill="#777" /></I>
      </FormulaBox>
      <I w={2} h={12} ml={13} mt={6}><path d="M1 0V12" stroke="#999" strokeWidth="1.5" strokeDasharray="2 3" /></I>
      <FormulaBox $w={103} $ml={13}>
        <I w={10} h={9} ml={11}><path d="M.5 0L9.5 9M9.5 0L.5 9" stroke="#bdbdbd" strokeWidth="1.5" /></I>
        <I w={11} h={9} ml={23}><path d="M.5 5L4 8L10.5 .5" stroke="#bdbdbd" strokeWidth="2" /></I>
        <I w={12} h={13} ml={23}>
          <path d="M8 .8C5.5 -.5 5 2 4.5 5L3.5 10C3 12.5 1.5 12.8 .3 12M2 4.5H7M5.5 6.5C8 5 8 11.5 11 10M11 6C8 6 8 11 5 10.5" stroke="#555" strokeWidth="1.2" />
        </I>
      </FormulaBox>
      <FormulaBox $w={1034} $ml={2}>
        <T w={161} s={12} ml={10} mt={2}>Leadership/Taking Initiative</T>
        <I w={8} h={5} ml={850}><path d="M.5 .5L4 4L7.5 .5" stroke="#666" strokeWidth="1.8" /></I>
      </FormulaBox>
    </FormulaBar>
  );
}

const BLUE = "#94a5bb";
const GREEN = "#90a584";
const MAUVE = "#a58092";
const Blank = ({ n }) => (
  <>
    <RowHead><T w={n > 9 ? 12.5 : 7} s={12}>{n}</T></RowHead>
    {[0, 1, 2, 3, 4, 5, 6, 7].map((i) => <Cell key={i} />)}
  </>
);
const Heading = ({ lines }) => lines.map(([text, w]) => <T key={text} s={17} b={700} w={w} lato>{text}</T>);

function Sheet() {
  return (
    <SheetArea>
      <Grid>
        <Corner><I w={11} h={11}><path d="M11 0V11H0Z" fill="#b3b3b5" /></I></Corner>
        {"DEFGHIJ".split("").map((l) => <ColHead key={l}><T s={12}>{l}</T></ColHead>)}
        <ColHead $pl={50}><T s={12}>K</T></ColHead>
        <Blank n={7} />
        <Blank n={8} />
        <Blank n={9} />
        <RowHead $tall><T w={12.5} s={12}>10</T></RowHead>
        <Cell $line="#111" />
        <Cell $bg="#aeabaa" $line="#222" />
        <Cell $bg="#a4a3a2" $line="#a4a3a2"><Heading lines={[["Category & Parameter", 164]]} /></Cell>
        <Cell $bg="#b7d8a9" $line="#111" $span={2}><Heading lines={[["Attitude & Behaviour", 158]]} /></Cell>
        <Cell $bg="#d7a6bf" $line="#d7a6bf" $span={3} $align="flex-end"><Heading lines={[["Programming Ability", 151]]} /></Cell>
        <RowHead $on $tall><T w={12.5} s={12}>11</T></RowHead>
        <Cell $bg="#c6c5c7" $line="#111" />
        <Cell $flush $bg={BLUE} $line="#111"><Heading lines={[["S.n", 22]]} /></Cell>
        <Cell $flush $bg={BLUE} $line="#111"><Heading lines={[["Participant name", 126]]} /></Cell>
        <Cell $flush $bg={GREEN} $line="#111">
          <Heading lines={[["Attitude – Interest,", 143], ["inclination and", 109], ["involvement", 94]]} />
        </Cell>
        <Cell $flush $bg={GREEN} $line="#111"><Heading lines={[["Punctuality and", 115], ["attendance", 84]]} /></Cell>
        <Cell $flush $bg={MAUVE} $line="#111" $align="center">
          <Heading lines={[["Ability to understand", 158], ["requirements during the", 182], ["program", 63]]} />
        </Cell>
        <Cell $flush $bg={MAUVE} $line="#111">
          <Heading lines={[["Ability to", 69], ["translate", 67], ["requirements", 102], ["into an", 51], ["implementatio", 110], ["n", 9]]} />
        </Cell>
        <Cell $flush $bg={MAUVE} $line={MAUVE}>
          <Heading lines={[["Problem", 62], ["solving a", 65], ["(think,", 48], ["evaluate", 64], ["choose a", 64], ["alternate", 67], ["innovatio", 71], ["ativity)", 53]]} />
        </Cell>
        {[12, 13, 14, 15, 16, 17, 18].map((n) => <Blank key={n} n={n} />)}
        <Selection />
        <QuickTag>
          <I w={15} h={14}>
            <path d="M7 1.5H14.5V12.5H.5V8M7 4H12V6.5M4 10.5V8.5H12V10.5H4M8 6V8.5" stroke="#555" />
            <path d="M3.5 0H6.5L5 3.5H7L2 9L3 5H.5Z" fill="#e8862b" />
          </I>
        </QuickTag>
        <CrossCursor>
          <I w={14} h={14}>
            <path d="M4.5 1H9.5V4.5H13V9.5H9.5V13H4.5V9.5H1V4.5H4.5Z" fill="#fff" stroke="#000" strokeWidth="1.7" />
          </I>
        </CrossCursor>
      </Grid>
      <Gutter>
        <Track>
          <ScrollButton $w={14} $h={14}><I w={7} h={4}><path d="M0 4H7L3.5 0Z" fill="#555" /></I></ScrollButton>
          <Thumb />
        </Track>
      </Gutter>
    </SheetArea>
  );
}

function Bottom() {
  return (
    <>
      <SheetTabs>
        <I w={4} h={7} ml={25}><path d="M4 0V7L0 3.5Z" fill="#b5b5b7" /></I>
        <I w={4} h={7} ml={23}><path d="M0 0V7L4 3.5Z" fill="#b5b5b7" /></I>
        <Rule $h={19} $ml={37} $c="#8a8a8c" />
        <T w={43} s={12} ml={12}>Angular</T>
        <Rule $h={19} $ml={12} $c="#8a8a8c" />
        <T w={96} s={12} ml={12}>SpringBoot Score</T>
        <ActiveTab><T w={39} s={12} b={700} c="#247447">Sheet3</T></ActiveTab>
        <T w={195} s={12} ml={15}>Total Score Angular and SpringBoot</T>
        <HTrack>
          <ScrollButton $w={13} $h={14}><I w={4} h={7}><path d="M4 0V7L0 3.5Z" fill="#444" /></I></ScrollButton>
          <ScrollButton $w={198} $h={14} $ml={30} />
        </HTrack>
      </SheetTabs>
      <StatusBar>
        <T w={29} s={10.5} ml={7} mt={1}>Ready</T>
        <I w={14} h={14} ml={18}>
          <circle cx="6.5" cy="2" r="1.5" stroke={K} />
          <path d="M1 3.5L4.5 5V8L3 13M12 3.5L8.5 5V7.5M1 3.5C0 2 2 1.5 3 2.5L5 3.5M12 3.5C13 2 11 1.5 10 2.5L8 3.5M3 13C4 14 5 13 6.5 9M8 8L13 13M13 8L8 13" stroke={K} strokeWidth="1.1" />
        </I>
        <T w={115} s={10.5} ml={3}>Accessibility: Investigate</T>
        <T w={48} s={10.5} ml={743}>Count: 34</T>
        <ViewButton $ml={16} $on>
          <I w={12} h={12}><path d="M.5 .5H11.5V11.5H.5ZM.5 4H11.5M.5 8H11.5M4 .5V11.5M8 .5V11.5" stroke="#333" /></I>
        </ViewButton>
        <ViewButton>
          <I w={13} h={12}><path d="M.5 .5H12.5V11.5H.5ZM3 2.5H10V9.5H3ZM5 4.5H8M5 6H8M5 7.5H8" stroke="#333" /></I>
        </ViewButton>
        <ViewButton>
          <I w={13} h={12}><path d="M.5 .5H12.5V11.5H.5Z" stroke="#333" /></I>
        </ViewButton>
        <I w={3} h={12} ml={63}><rect width="3" height="12" fill="#333" /></I>
      </StatusBar>
    </>
  );
}

function TaskbarRow() {
  return (
    <Taskbar>
      <Slot $w={45}>
        <I w={15} h={14}><path d="M0 2L6.5 1V6.6H0ZM7.3 .9L15 0V6.6H7.3ZM0 7.4H6.5V13L0 12.1ZM7.3 7.4H15V14L7.3 13.1Z" fill="#fff" /></I>
      </Slot>
      <Slot $w={45}>
        <I w={20} h={21} ml={-1}><circle cx="12" cy="8" r="7" stroke="#fff" strokeWidth="2" /><path d="M7 13L.5 20.5" stroke="#fff" strokeWidth="2" /></I>
      </Slot>
      <Slot $w={43}>
        <I w={15} h={15}><path d="M.5 0V2.5H10V0M.5 5H10V10H.5ZM.5 15V12.5H10V15M13.5 0V15" stroke="#fff" /><path d="M13.5 3V6" stroke="#fff" strokeWidth="3" /></I>
      </Slot>
      <Slot $w={49}>
        <I w={22} h={22} ml={3}>
          <path d="M6.5 5V1.5H15.5V5" stroke="#2bb3e8" strokeWidth="1.8" />
          <path d="M0 4H22V18C22 20 21 22 18 22H4C1 22 0 20 0 18Z" fill="#f2f2f2" />
          <path d="M6.5 8H10.5V12H6.5Z" fill="#f25022" /><path d="M11.5 8H15.5V12H11.5Z" fill="#7fba00" />
          <path d="M6.5 13H10.5V17H6.5Z" fill="#00a4ef" /><path d="M11.5 13H15.5V17H11.5Z" fill="#ffb900" />
        </I>
      </Slot>
      <Slot $bg="#ac6a33" $w={45}>
        <I w={22} h={20}>
          <path d="M6 1H20V12H6Z" fill="#1b8fe0" /><path d="M6 1H13V7H6Z" fill="#1066b5" /><path d="M13 6H20V12H13Z" fill="#35b8f1" />
          <path d="M6 10L14 15L22 8V20H8Z" fill="#1a78cf" /><path d="M14 15L22 8V20Z" fill="#35a9ea" />
          <rect y="5" width="11" height="11" rx="1" fill="#0f64b8" />
          <ellipse cx="5.5" cy="10.5" rx="2.5" ry="3" stroke="#fff" strokeWidth="1.5" />
        </I>
        <Running $full $c="#ff7a00" />
      </Slot>
      <Slot>
        <I w={22} h={20} ml={2}>
          <rect x="6" width="16" height="20" rx="1" fill="#2b6fd0" /><path d="M6 0H22V5H6Z" fill="#41a5ee" /><path d="M6 14H22V20H6Z" fill="#17479e" />
          <rect y="5" width="11" height="11" rx="1" fill="#185abd" />
          <path d="M2 8L3.8 13L5.5 8.5L7.2 13L9 8" stroke="#fff" strokeWidth="1.3" />
        </I>
      </Slot>
      <Slot>
        <I w={22} h={20} ml={1}>
          <ellipse cx="11" cy="7" rx="10" ry="6" transform="rotate(-20 11 7)" fill="#e6ddd8" />
          <path d="M1 9C5 3 13 8 19 8C15 14 3 14 1 9Z" fill="#b78f85" />
          <path d="M11 6L17 15M20 8L12 14" stroke="#ddd" strokeWidth="1.3" />
          <circle cx="18" cy="17" r="2.3" stroke="#3b9be0" strokeWidth="1.4" /><circle cx="12" cy="16" r="2.3" stroke="#3b9be0" strokeWidth="1.4" />
        </I>
        <Running />
      </Slot>
      <Slot>
        <I w={22} h={22} ml={2}>
          <path d="M16 0L22 3V19L16 22Z" fill="#2c9fe6" /><path d="M16 0L0 14L2.5 16.5L17 6ZM16 22L0 8L2.5 5.5L17 16Z" fill="#1277c4" />
        </I>
        <Running />
      </Slot>
      <Slot>
        <I w={22} h={22} ml={2}>
          <circle cx="11" cy="11" r="11" fill="#fff" />
          <g strokeWidth="2.6" strokeLinecap="round">
            <path d="M9 5V10" stroke="#36c5f0" /><path d="M5 9H8" stroke="#36c5f0" /><path d="M13 5V9M16 9H17" stroke="#2eb67d" />
            <path d="M5 13H9M9 16V17" stroke="#e01e5a" /><path d="M13 13H17" stroke="#ecb22e" />
          </g>
        </I>
        <CountDot><T w={11} s={9}>20</T></CountDot>
        <Running />
      </Slot>
      <Slot $bg="#4a5a64">
        <I w={22} h={20} ml={2}>
          <rect x="6" width="16" height="20" rx="1" fill="#21a366" /><path d="M14 0H22V5H14Z" fill="#33c481" /><path d="M6 10H14V20H6Z" fill="#185c37" /><path d="M14 10H22V20H14Z" fill="#107c41" />
          <rect y="5" width="11" height="11" rx="1" fill="#107c41" />
          <path d="M3 8L8 13.5M8 8L3 13.5" stroke="#fff" strokeWidth="1.5" />
        </I>
        <Running $full />
      </Slot>
      <Slot>
        <I w={20} h={20}>
          <path d="M6 1L19 0L15 18L0 17Z" fill="#8fcbd6" /><path d="M7 2L13 1L9 17L2 16Z" fill="#c9eaf0" /><path d="M19 0L20 2L16 20L2 19L0 17L15 18Z" fill="#e8e8e8" />
        </I>
        <Running />
      </Slot>
      <Slot>
        <I w={24} h={20} ml={2}>
          <circle cx="13" cy="2" r="3.5" fill="#7b83eb" /><rect x="8" y="5" width="14" height="13" rx="4" fill="#5059c9" />
          <rect y="5" width="11" height="11" rx="1" fill="#4b53bc" /><path d="M2.5 8H8.5M5.5 8V14" stroke="#fff" strokeWidth="1.5" />
        </I>
        <CountDot><T w={5} s={10}>1</T></CountDot>
        <Running />
      </Slot>
      <Slot>
        <I w={20} h={20}><path d="M0 12L10 8L20 11L12 20L8 14L3 17Z" fill="#b9c3cc" /><path d="M10 14L14 13L12 20Z" fill="#c8453a" /></I>
      </Slot>
      <Slot>
        <I w={22} h={22} ml={2}><circle cx="9" cy="11" r="10" fill="#2d9a48" /><circle cx="16" cy="15" r="7" fill="#0e8f75" /><path d="M13.5 18L16 12.5L18.5 18M14.5 16H17.5" stroke="#fff" /></I>
        <Running $multi />
      </Slot>
      <Slot><I w={20} h={20} ml={4}><circle cx="10" cy="10" r="9.5" fill="#d35230" /></I></Slot>
      <Slot>
        <I w={22} h={22} ml={2}><circle cx="11" cy="11" r="10.5" fill="#0b5cff" /><rect x="5" y="7" width="12" height="8" rx="2" fill="#fff" /></I>
        <Running $multi />
      </Slot>
      <Slot>
        <I w={20} h={18} ml={2}><path d="M0 0H20V17H0Z" fill="#f5c542" /><path d="M3 11H17V15H3Z" fill="#3c8fd8" /><path d="M7 13H13V18H7Z" fill="#e8b22f" /></I>
        <Running />
      </Slot>
      <Tray>
        <I w={11} h={6} ml={1}><path d="M.5 5.5L5.5 .5L10.5 5.5" stroke="#fff" strokeWidth="1.2" /></I>
        <I w={12} h={15} ml={12}>
          <path d="M.8 4.5H8V11H.8ZM8 6.5L10.8 5V10.5L8 9" stroke="#fff" strokeWidth="1.3" />
          <path d="M2 1.8C4 -.2 7 -.2 9 1.8M2 13.5C4 15.5 7 15.5 9 13.5" stroke="#fff" />
        </I>
        <I w={15} h={12} ml={8}>
          <path d="M3 9C-1 8 0 4.5 3 4C4 0 9 0 10 3.5C13 3.5 14 8 11 9Z" fill="#1684d8" />
          <circle cx="10.5" cy="8" r="4.2" fill="#d13438" /><path d="M9 6.5L12 9.5M12 6.5L9 9.5" stroke="#fff" strokeWidth="1.2" />
        </I>
        <I w={11} h={15} ml={9}>
          <rect x="2.5" width="6" height="10.5" rx="1.5" fill="#fff" /><path d="M.7 6V9C.7 12.5 10.3 12.5 10.3 9V6M5.5 12V14.5M3 14.5H8" stroke="#fff" />
        </I>
        <I w={15} h={11} ml={10}>
          <path d="M4.5 3H13.5V9.5H4.5Z" fill="#fff" stroke="#fff" /><path d="M14.5 4.5V8M.5 .5V3.5H4V.5M2 3.5V7H4.5" stroke="#fff" strokeWidth="1.2" />
        </I>
        <I w={12} h={12} ml={9}>
          <path d="M.5 11.5C.5 5 5 .8 11.5 .8M3.5 11.5C3.5 7 6.5 3.8 11.5 3.8M6.5 11.5C6.5 8.5 8.5 6.8 11.5 6.8" stroke="#b9c0cc" /><circle cx="10.5" cy="10.5" r="1.5" fill="#fff" />
        </I>
        <I w={16} h={13} ml={8}>
          <path d="M.5 4.5H2.5L5.5 1.5V11.5L2.5 8.5H.5ZM8 4.5C9 5.5 9 7.5 8 8.5M10.3 2.5C12.3 4.5 12.3 8.5 10.3 10.5M12.6 .8C15.5 3.8 15.5 9.2 12.6 12.2" stroke="#fff" />
        </I>
        <T w={22} s={11.5} ml={8} mt={-1}>ENG</T>
        <Clock>
          <T w={25} s={12}>10:22</T>
          <T w={55} s={12}>28-06-2023</T>
        </Clock>
        <I w={16} h={15} ml={14}><path d="M.6 .6H15.4V11.4H10.5L8 14L5.5 11.4H.6Z" stroke="#fff" strokeWidth="1.2" /></I>
        <Peek />
      </Tray>
    </Taskbar>
  );
}

const Up = ({ ml }) => (
  <I w={8} h={5} ml={ml} mt={15}><path d="M.7 4.3L4 1L7.3 4.3" stroke="#a5a5a5" strokeWidth="1.5" /></I>
);

function MeetingControls() {
  return (
    <Controls>
      <Control $w={52} $ml={19}>
        <ControlIcon>
          <I w={24} h={24} ml={1}>
            <rect x="8.5" y="1.5" width="8" height="13" rx="4" fill="#8f8f8f" />
            <path d="M6 9V11C6 19 19 19 19 11V9M12.5 17V22M8.5 22H16.5" stroke="#8f8f8f" strokeWidth="1.7" />
            <path d="M1 23L23.5 .5" stroke="#f05050" strokeWidth="1.6" />
          </I>
        </ControlIcon>
        <ControlLabel><T w={44} s={12}>Unmute</T></ControlLabel>
      </Control>
      <Up ml={3} />
      <Control $w={80} $ml={16}>
        <ControlIcon>
          <I w={24} h={24} ml={2}>
            <rect y="5" width="16.5" height="15" rx="3" fill="#a5a5a5" /><path d="M18 10L24 5.5V19.5L18 15.5Z" fill="#a5a5a5" />
            <path d="M.5 23.5L23.5 .5" stroke="#1a1a1a" strokeWidth="4" /><path d="M.5 23.5L23.5 .5" stroke="#f05050" strokeWidth="1.6" />
          </I>
        </ControlIcon>
        <ControlLabel><T w={59} s={12}>Start Video</T></ControlLabel>
      </Control>
      <Control $w={78} $ml={292}>
        <ControlIcon>
          <I w={25} h={19} ml={18}><UserGlyph /></I>
          <T w={14} s={12.5} ml={3} mt={-6}>25</T>
        </ControlIcon>
        <ControlLabel><T w={63} s={12}>Participants</T></ControlLabel>
      </Control>
      <Up ml={10} />
      <Control $w={52} $ml={22}>
        <ControlIcon>
          <I w={25} h={19}>
            <path d="M10 0H21C24 0 25 1 25 4V8C25 10.5 24 12 22 12V15.5L18 12V8C18 5 17 3.5 14 3.5H8C8 1 8.5 0 10 0Z" fill="#a5a5a5" />
            <path d="M3 5H13C15.5 5 16.5 6 16.5 8V11C16.5 13.5 15.5 15 13 15H8.5L3.5 19V15C1 15 0 13.5 0 11V8C0 6 1 5 3 5Z" fill="#a5a5a5" />
          </I>
        </ControlIcon>
        <ControlLabel><T w={27} s={12}>Q&A</T></ControlLabel>
      </Control>
      <Control $w={90} $ml={14} $on>
        <ControlIcon>
          <I w={22} h={19} mt={-1}><path d="M4 0H18C21 0 22 1 22 4V10C22 13 21 14 18 14H9L4 18.5V14C1 14 0 13 0 10V4C0 1 1 0 4 0Z" fill="#dcdcdc" /></I>
        </ControlIcon>
        <ControlLabel><T w={25} s={12} c="#f0f0f0">Chat</T></ControlLabel>
      </Control>
      <Control $w={84} $ml={6}>
        <ControlIcon>
          <I w={25} h={19}><rect width="25" height="19" rx="4" fill="#23d959" /><path d="M13.5 15V4.5M9.5 8.5L13.5 4.5L17.5 8.5" stroke="#111" strokeWidth="2" /></I>
        </ControlIcon>
        <ControlLabel><T w={70} s={12} c="#23d959">Share Screen</T></ControlLabel>
      </Control>
      <Control $w={70} $ml={16}>
        <ControlIcon>
          <I w={17} h={20} ml={2}>
            <path d="M2 10V4M5.5 10V2M9 10V1.5M12 10V3.5" stroke="#a5a5a5" strokeWidth="2.4" strokeLinecap="round" />
            <path d="M.8 8V13C1 17 4 20 8 20C11 20 12.5 18 14 15L17 10.5C16.5 9.5 15 10 13.3 12V8Z" fill="#a5a5a5" />
          </I>
        </ControlIcon>
        <ControlLabel><T w={59} s={12}>Raise Hand</T></ControlLabel>
      </Control>
      <Control $w={50} $ml={24}>
        <ControlIcon>
          <I w={17} h={17} ml={1}>
            <path d="M1.2 8V4C1.2 2 2 1.2 4 1.2H8M15.8 9V13C15.8 15 15 15.8 13 15.8H9" stroke="#a5a5a5" strokeWidth="1.6" />
            <circle cx="13.8" cy="3.2" r="2.4" stroke="#a5a5a5" strokeWidth="1.6" /><circle cx="3.2" cy="13.8" r="2.4" stroke="#a5a5a5" strokeWidth="1.6" />
          </I>
        </ControlIcon>
        <ControlLabel><T w={27} s={12} ml={1}>Apps</T></ControlLabel>
      </Control>
      <Leave><T w={33} s={12} b={700} c="#fff">Leave</T></Leave>
    </Controls>
  );
}

function Overlays() {
  return (
    <>
      <Banner>
        <BannerPart $w={251} $bg="#23d959" $pl={15}><T w={221} s={12} b={600} c="#2c4a36">You are viewing SRO-BLR- S66's screen</T></BannerPart>
        <BannerPart $w={121} $bg="#232323" $pl={16}>
          <T w={69} s={12} b={600} c="#fff">View Options</T>
          <Chev c="#ddd" ml={19} />
        </BannerPart>
      </Banner>
      <Pill $x={1246} $w={48}><T w={36} s={12}>Sign in</T></Pill>
      <Pill $x={1303} $w={55}>
        <I w={11} h={11}><path d="M0 0H3V2.5H0ZM4 0H7V2.5H4ZM8 0H11V2.5H8ZM0 4H11V11H0Z" fill="#d8d8d8" /></I>
        <T w={26} s={12} ml={6}>View</T>
      </Pill>
      <Watermark>
        <T w={143} s={17}>Activate Windows</T>
        <T w={197} s={12.5} mt={2}>Go to Settings to activate Windows.</T>
      </Watermark>
      <SpeakerPanel>
        <SpeakerTools>
          <I w={12} h={3} ml={6} mt={8}><rect width="12" height="3" rx="1" fill="#2d8cff" /></I>
          <I w={12} h={8} ml={16} mt={3}><rect width="12" height="8" rx="1" fill="#c4c4c4" /></I>
          <I w={12} h={12} ml={16}><path d="M0 0H12V5H0ZM0 7H12V12H0Z" fill="#c4c4c4" /></I>
          <I w={14} h={14} ml={15}><path d="M0 0H4V4H0ZM5 0H9V4H5ZM10 0H14V4H10ZM0 5H4V9H0ZM5 5H9V9H5ZM10 5H14V9H10ZM0 10H4V14H0ZM5 10H9V14H5ZM10 10H14V14H10Z" fill="#c4c4c4" /></I>
          <I w={16} h={12} ml={101}><path d="M0 0H8V7H16V12H0ZM9.5 0H16V5.5H9.5Z" fill="#c4c4c4" /></I>
        </SpeakerTools>
        <Speaker><T w={129} s={12} ml={24} mt={2}>Talking: SRO-BLR- S66</T></Speaker>
      </SpeakerPanel>
      <Toast>
        <ToastAvatar><T w={16} s={12} b={700}>GS</T></ToastAvatar>
        <ToastBody>
          <T w={142} s={12} b={700}>From Ganesh Shinde to</T>
          <T w={56} s={12} b={700}>Everyone</T>
          <T w={19} s={12} ml={-2} mt={12}>yes</T>
        </ToastBody>
        <I w={9} h={9} ml={25} mt={7}><path d="M.5 .5L8.5 8.5M8.5 .5L.5 8.5" stroke="#b5b5b5" /></I>
        <ToastPointer />
      </Toast>
      <ChatBadge><T w={5} s={9}>1</T></ChatBadge>
      <Tooltip><T w={68} s={12}>Chat (Alt+H)</T></Tooltip>
    </>
  );
}

export default function App() {
  return (
    <>
      <Global />
      <Meeting>
        <Stage>
          <Rail>
            <Shield>
              <I w={12} h={14}>
                <path d="M6 0L12 2.2V7C12 10.5 9.5 13 6 14C2.5 13 0 10.5 0 7V2.2Z" fill="#23d959" />
                <path d="M3 7L5.3 9.2L9 5.2" stroke="#143a20" strokeWidth="1.5" />
              </I>
            </Shield>
          </Rail>
          <Screen>
            <Title />
            <Tabs />
            <RibbonBar />
            <Formula />
            <Sheet />
            <Bottom />
            <TaskbarRow />
          </Screen>
        </Stage>
        <MeetingControls />
        <Overlays />
      </Meeting>
    </>
  );
}
